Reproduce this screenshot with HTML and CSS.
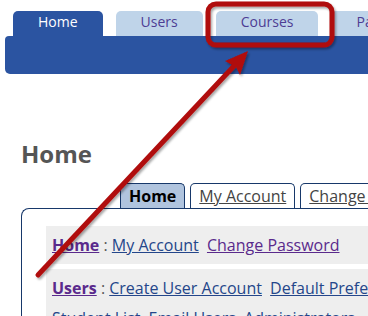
FILE: index.html
```html
<!DOCTYPE html>
<html lang="en">
<head>
    <meta charset="UTF-8">
    <meta name="viewport" content="width=device-width, initial-scale=1.0">
    <title>Home</title>
    <link rel="stylesheet" href="styles.css">
</head>
<body>
    <div class="page">
        <ul class="navtabs">
            <li class="navtab active">Home</li>
            <li class="navtab">Users</li>
            <li class="navtab">Courses</li>
            <li class="navtab">Pages</li>
        </ul>
        <div class="navbar"></div>

        <div class="content">
            <h1 class="title">Home</h1>

            <ul class="subtabs">
                <li class="subtab current">Home</li>
                <li class="subtab"><a href="#">My Account</a></li>
                <li class="subtab"><a href="#">Change Password</a></li>
            </ul>

            <div class="panel">
                <div class="menu-row">
                    <a class="section visited" href="#">Home</a> :
                    <a class="first" href="#">My Account</a>
                    <a class="visited" href="#">Change Password</a>
                </div>
                <div class="menu-row">
                    <a class="section visited" href="#">Users</a> :
                    <a class="first" href="#">Create User Account</a>
                    <a href="#">Default Preferences</a>
                    <br>
                    <a class="first" href="#">Student List</a>
                    <a href="#">Email Users</a>
                    <a href="#">Administrators</a>
                </div>
            </div>
        </div>

        <!-- callout drawn over the screenshot -->
        <svg class="callout" width="368" height="316" viewBox="0 0 368 316">
            <defs>
                <filter id="shadow" x="-20%" y="-20%" width="140%" height="140%">
                    <feDropShadow dx="1.5" dy="2" stdDeviation="1.2" flood-color="#000" flood-opacity="0.35"/>
                </filter>
            </defs>
            <g filter="url(#shadow)">
                <rect x="208" y="4" width="124" height="41" rx="8" fill="none" stroke="#b00c0c" stroke-width="5"/>
                <line x1="38" y1="275" x2="234" y2="66" stroke="#b00c0c" stroke-width="5" stroke-linecap="round"/>
                <polygon points="248,51 225,61 236,67 240,75" fill="#b00c0c"/>
            </g>
        </svg>
    </div>
</body>
</html>
```

FILE: styles.css
```css
html, body {
    margin: 0;
    padding: 0;
    overflow: hidden;
    background-color: #fff;
}

body {
    font-family: "Open Sans", Arial, sans-serif;
    color: #333;
}

.page {
    position: relative;
    width: 368px;
    height: 316px;
    overflow: hidden;
}

/* top navigation */
.navtabs {
    display: flex;
    margin: 0;
    padding: 11px 0 0 13px;
    list-style: none;
    white-space: nowrap;
}

.navtab {
    flex: none;
    height: 21px;
    padding: 0 25px 4px;
    margin-right: 13px;
    background-color: #bfd4e9;
    border-radius: 5px 5px 0 0;
    font-size: 14px;
    line-height: 21px;
    color: #4d3d94;
}

.navtab.active {
    background-color: #2b54a1;
    color: #fff;
}

.navbar {
    height: 38px;
    margin-left: 5px;
    background-color: #2b54a1;
    border-radius: 4px 0 0 5px;
}

/* page body */
.content {
    padding: 64px 0 0 21px;
}

.title {
    margin: 0;
    font-size: 24px;
    line-height: 32px;
    font-weight: bold;
    color: #555;
}

.subtabs {
    display: flex;
    margin: 13px 0 0 99px;
    padding: 0;
    list-style: none;
    white-space: nowrap;
}

.subtab {
    flex: none;
    height: 22px;
    padding: 1px 8px 1px;
    margin-right: 5px;
    border: 1px solid #17386a;
    border-bottom: none;
    border-radius: 5px 5px 0 0;
    background-color: #fff;
    font-size: 16px;
    line-height: 22px;
}

.subtab a {
    color: #444;
}

.subtab.current {
    background-color: #b0c4de;
    font-weight: bold;
    color: #000;
}

.panel {
    width: 520px;
    padding: 17px 0 0 24px;
    border-top: 1px solid #17386a;
    border-left: 1px solid #17386a;
    border-radius: 8px 0 0 0;
}

.menu-row {
    padding: 4px 6px;
    margin-bottom: 5px;
    background-color: #eee;
    font-size: 16px;
    line-height: 30px;
    color: #555;
    white-space: nowrap;
}

.menu-row a {
    margin-left: 4px;
    color: #24468a;
}

.menu-row a.section,
.menu-row a.first {
    margin-left: 0;
}

.menu-row a.section {
    font-weight: bold;
}

.menu-row a.visited {
    color: #5a2a8c;
}

.callout {
    position: absolute;
    top: 0;
    left: 0;
    pointer-events: none;
}
```
